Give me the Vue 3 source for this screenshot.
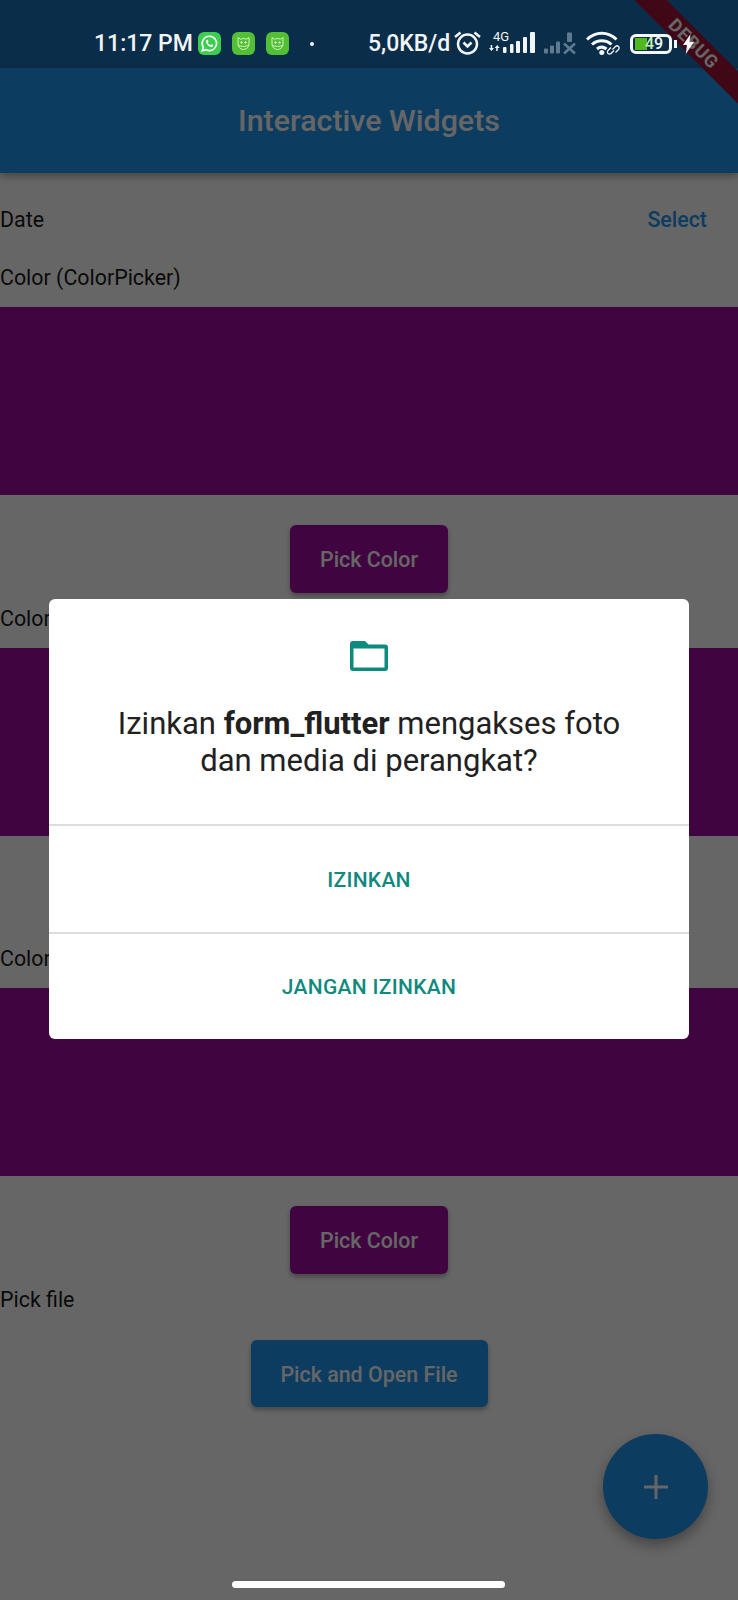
<template>
  <div class="screen">
    <div class="status-bg"></div>
    <header class="appbar">Interactive Widgets</header>

    <main class="content">
      <div class="date-row">
        <span class="label-text">Date</span>
        <span class="select">Select</span>
      </div>

      <section v-for="(s, i) in sections" :key="i" class="color-section">
        <div class="label">{{ s }}</div>
        <div class="swatch"></div>
        <button class="btn btn-purple">Pick Color</button>
      </section>

      <div class="label">Pick file</div>
      <button class="btn btn-blue btn-file">Pick and Open File</button>
    </main>

    <div class="fab">
      <svg width="30" height="30" viewBox="0 0 30 30">
        <path d="M15 3v24M3 15h24" stroke="#fff" stroke-width="3" fill="none" />
      </svg>
    </div>

    <div class="debug-banner"><span>DEBUG</span></div>

    <div class="scrim">
      <div class="dialog">
        <div class="dialog-top">
          <svg class="folder" width="38" height="30" viewBox="0 0 38 30">
            <path
              d="M3 0h12l3.500 3.500H35a3 3 0 0 1 3 3V27a3 3 0 0 1-3 3H3a3 3 0 0 1-3-3V3a3 3 0 0 1 3-3zM3.500 7.500v19h31v-19z"
              fill="#0d8a7d"
              fill-rule="evenodd"
            />
          </svg>
          <p class="question">
            Izinkan <b>form_flutter</b> mengakses foto<br />dan media di perangkat?
          </p>
        </div>
        <div class="dialog-action">IZINKAN</div>
        <div class="dialog-action">JANGAN IZINKAN</div>
      </div>
    </div>

    <div class="status">
      <span class="time">11:17 PM</span>
      <span class="app-icon wa">
        <svg width="23" height="23" viewBox="0 0 23 23">
          <path d="M11.500 4.200a7.200 7.200 0 0 0-6.200 10.900l-1 3.700 3.800-1A7.200 7.200 0 1 0 11.500 4.200z" fill="none" stroke="#fff" stroke-width="1.600" />
          <path d="M8.900 7.900c-.5.300-1 1-.9 1.900.2 2.200 2.800 4.800 5.100 5.200 1 .1 1.700-.4 2-1 .2-.4.200-.8.100-.9l-1.800-.9-.9 1c-1.200-.4-2.300-1.500-2.800-2.700l.8-.9-.8-1.900z" fill="#fff" />
        </svg>
      </span>
      <span v-for="n in 2" :key="n" class="app-icon cat">
        <svg width="23" height="23" viewBox="0 0 23 23" fill="none" stroke="#d4f2bc" stroke-width="1">
          <path d="M6 5.500l2.500 1.700a6.500 6.500 0 0 1 6 0L17 5.500V12a5.500 5.500 0 1 1-11 0z" />
          <path d="M6.500 13.500c3 1.200 7 1.200 10 0" />
          <circle cx="9.500" cy="10.500" r=".8" fill="#d4f2bc" />
          <circle cx="13.500" cy="10.500" r=".8" fill="#d4f2bc" />
        </svg>
      </span>
      <span class="dot"></span>
      <span class="speed">5,0KB/d</span>
      <svg class="alarm" width="27" height="25" viewBox="0 0 27 25" fill="none" stroke="#f2f4f6" stroke-width="2.500">
        <circle cx="13.500" cy="13" r="9.500" />
        <path d="M1 6 6.500 1.500M26 6 20.500 1.500" />
        <path d="M9.500 11.500l4 4 4-4" stroke-width="2.600" />
      </svg>
      <span class="net">
        <span class="net-label">4G</span>
        <svg width="46" height="35" viewBox="0 0 46 35" fill="#f2f4f6">
          <path d="M3.200 19v3H5l-2.500 3-2.500-3h1.700v-3zM7.200 25v-3H5.700l2.500-3 2.500 3H8.700v3z" />
          <rect x="14" y="21" width="3.500" height="6" rx="1" />
          <rect x="21" y="18" width="3.500" height="9" rx="1" />
          <rect x="27" y="15" width="4" height="12" rx="1" />
          <rect x="34" y="11" width="4" height="16" rx="1" />
          <rect x="41" y="6" width="5" height="21" rx="1" />
        </svg>
      </span>
      <svg class="signal2" width="32" height="24" viewBox="0 0 32 24" fill="#5f7a8f">
        <rect x="0" y="16.500" width="4" height="5" rx="1" />
        <rect x="6" y="13.500" width="4" height="8" rx="1" />
        <rect x="12" y="9.500" width="4" height="12" rx="1" />
        <rect x="23" y=".5" width="5" height="9.500" rx="1" />
        <path d="M20 11.500l11 10M31 11.500l-11 10" stroke="#5f7a8f" stroke-width="2.600" fill="none" />
      </svg>
      <svg class="wifi" width="34" height="25" viewBox="0 0 34 25" fill="none" stroke="#f6f7f8" stroke-width="3">
        <path d="M1 8.500c8.500-8.500 21-8.500 29.500 0" />
        <path d="M6 13.500c5.500-5 14-5 19.500 0" />
        <path d="M11 18c2.800-2.300 6.500-2.300 9.500 0" />
        <circle cx="15.800" cy="21.500" r="2.500" fill="#f6f7f8" stroke="none" />
        <path d="M26.500 18.500l3-3a2 2 0 0 1 3 3l-3 3M28 19.500l-3 3a2 2 0 0 1-3-3l3-3" stroke-width="1.300" />
      </svg>
      <span class="battery">
        <span class="battery-fill"></span>
        <span class="battery-num"><span class="battery-four">4</span>9</span>
      </span>
      <span class="nib"></span>
      <svg class="bolt" width="11" height="20" viewBox="0 0 11 20">
        <path d="M7.500 0 0 11h4L2.800 20 11 8H6.500z" fill="#f6f7f8" />
      </svg>
    </div>

    <div class="home-bar"></div>
  </div>
</template>

<script setup>
const sections = ['Color (ColorPicker)', 'Color (ColorPicker)', 'Color (ColorPicker)']
</script>

<style>
html,
body {
  margin: 0;
  background: #fff;
}
</style>

<style scoped>
.screen {
  position: relative;
  width: 738px;
  height: 1600px;
  overflow: hidden;
  background: #fff;
  font-family: Roboto, 'Liberation Sans', sans-serif;
  color: #000;
}

.status-bg {
  height: 68px;
  background: #1a72b8;
}

.appbar {
  height: 105px;
  background: #2196f3;
  color: #fff;
  font-size: 30.4px;
  font-weight: 500;
  display: flex;
  align-items: center;
  justify-content: center;
  box-shadow: 0 3px 8px rgba(0, 0, 0, 0.35);
  position: relative;
}

.date-row {
  margin-top: 15px;
  height: 64px;
  display: flex;
  align-items: center;
  justify-content: space-between;
  padding-right: 31px;
}

.label-text,
.label {
  font-size: 21.4px;
  line-height: 24px;
  color: #1a1a1a;
}

.select {
  font-size: 21.4px;
  font-weight: 500;
  color: #2196f3;
  margin-top: -1px;
}

.label {
  padding: 14px 0 17px;
}

.color-section {
  display: flex;
  flex-direction: column;
  align-items: center;
}

.color-section .label {
  align-self: flex-start;
}

.swatch {
  width: 100%;
  height: 188px;
  background: #a00da0;
}

.btn {
  display: block;
  height: 67.5px;
  padding: 2px 0 0;
  border: 0;
  border-radius: 6px;
  color: #fff;
  font-family: inherit;
  font-size: 21.4px;
  font-weight: 500;
  box-shadow: 0 3px 5px rgba(0, 0, 0, 0.3);
}

.btn-purple {
  width: 158px;
  margin-top: 30px;
  background: #a00da0;
}

.btn-blue {
  background: #2196f3;
}

.btn-file {
  width: 237px;
  margin: 11px auto 0;
}

.fab {
  position: absolute;
  left: 603px;
  top: 1434px;
  width: 105px;
  height: 105px;
  border-radius: 50%;
  background: #2196f3;
  display: flex;
  align-items: center;
  justify-content: center;
  box-shadow: 0 6px 14px rgba(0, 0, 0, 0.35);
}

.debug-banner {
  position: absolute;
  left: 594px;
  top: 32px;
  width: 200px;
  height: 23px;
  background: #a0163a;
  transform: rotate(45deg);
  display: flex;
  align-items: center;
  justify-content: center;
  color: #fff;
  font-size: 18px;
  font-weight: 700;
  letter-spacing: 1px;
}

.scrim {
  position: absolute;
  inset: 0;
  background: rgba(0, 0, 0, 0.6);
  padding-top: 599px;
  box-sizing: border-box;
  display: flex;
  justify-content: center;
  align-items: flex-start;
}

.dialog {
  width: 640px;
  height: 440px;
  background: #fff;
  border-radius: 6px;
  display: flex;
  flex-direction: column;
}

.dialog-top {
  height: 225px;
  display: flex;
  flex-direction: column;
  align-items: center;
  padding-top: 42px;
  box-sizing: border-box;
}

.folder {
  display: block;
}

.question {
  margin: 34px 0 0;
  font-size: 31px;
  line-height: 37px;
  text-align: center;
  color: #212121;
}

.dialog-action {
  flex: 1;
  padding-top: 2px;
  border-top: 2px solid #ddd;
  display: flex;
  align-items: center;
  justify-content: center;
  font-size: 21px;
  font-weight: 500;
  color: #0d8a7d;
  letter-spacing: 0.3px;
}

.status {
  position: absolute;
  left: 0;
  top: 0;
  width: 100%;
  height: 68px;
  padding: 19px 0 0 94px;
  box-sizing: border-box;
  display: flex;
  align-items: center;
  color: #f2f4f6;
}

.time {
  width: 104px;
  font-size: 23px;
  font-weight: 500;
}

.app-icon {
  width: 23px;
  height: 23px;
  border-radius: 6px;
  margin-right: 11px;
  display: flex;
  background: #52c035;
}

.wa {
  background: #3ccf4e;
}

.dot {
  width: 4px;
  height: 4px;
  border-radius: 50%;
  background: #f2f4f6;
  margin: 0 54px 0 10px;
}

.speed {
  width: 85px;
  font-size: 23px;
  font-weight: 500;
}

.alarm {
  margin-right: 8px;
  margin-left: 1px;
}

.net {
  position: relative;
  width: 46px;
  height: 35px;
  margin-right: 9px;
}

.net-label {
  position: absolute;
  left: 4px;
  top: 5px;
  font-size: 13px;
  line-height: 11px;
}

.signal2 {
  margin-right: 10px;
}

.wifi {
  margin-right: 10px;
}

.battery {
  position: relative;
  width: 42px;
  height: 20px;
  border: 3px solid #f6f7f8;
  border-radius: 6px;
  box-sizing: border-box;
  display: block;
}

.battery-fill {
  position: absolute;
  left: 2px;
  top: 1px;
  bottom: 1px;
  width: 12px;
  background: #52b81e;
}

.battery-num {
  position: absolute;
  left: 12px;
  top: -1px;
  font-size: 16px;
  line-height: 16px;
  font-weight: 500;
  color: #f6f7f8;
}

.battery-four {
  color: #c9eeaa;
}

.nib {
  width: 3px;
  height: 8px;
  background: #f6f7f8;
  margin: 0 6px 0 2px;
}

.bolt {
  display: block;
}

.home-bar {
  position: absolute;
  left: 232px;
  top: 1581px;
  width: 273px;
  height: 7px;
  border-radius: 4px;
  background: #fff;
}
</style>
